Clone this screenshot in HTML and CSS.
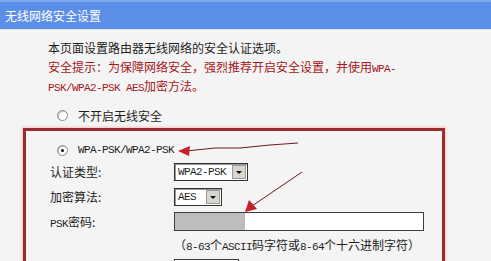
FILE: index.html
```html
<!DOCTYPE html>
<html lang="zh-CN">
<head>
  <meta charset="UTF-8">
  <title>无线网络安全设置</title>
  <link rel="stylesheet" href="styles.css">
</head>
<body>
<div class="title-bar">无线网络安全设置</div>

<div class="page">
  <div class="intro">
    <p>本页面设置路由器无线网络的安全认证选项。</p>
    <p class="warn">安全提示：为保障网络安全，强烈推荐开启安全设置，并使用<span class="en">WPA-</span></p>
    <p class="warn"><span class="en">PSK/WPA2-PSK AES</span>加密方法。</p>
  </div>

  <div class="opt opt-off">
    <i class="radio"></i><span>不开启无线安全</span>
  </div>

  <div class="box">
    <div class="opt">
      <i class="radio on"></i><span class="en">WPA-PSK/WPA2-PSK</span>
    </div>

    <div class="row">
      <label>认证类型:</label>
      <div class="sel wide"><span class="en">WPA2-PSK</span><b class="drop"></b></div>
    </div>
    <div class="row">
      <label>加密算法:</label>
      <div class="sel"><span class="en">AES</span><b class="drop"></b></div>
    </div>
    <div class="row">
      <label><span class="en">PSK</span>密码:</label>
      <div class="txt"><i class="mask"></i></div>
    </div>
    <div class="hint">（<span class="en">8-63</span>个<span class="en">ASCII</span>码字符或<span class="en">8-64</span>个十六进制字符）</div>
    <div class="row">
      <label>组密钥更新周期:</label>
      <div class="txt short"><span class="en">86400</span></div>
    </div>
  </div>
</div>

<!-- the two hand-drawn arrows on top of the form -->
<svg class="marks" width="491" height="261" viewBox="0 0 491 261">
  <polyline points="186,151 215,148 240,148 270,145 298,143" fill="none" stroke="#6b1a1c" stroke-width="1"/>
  <polygon points="178,151 190,146 189,156" fill="#c8202a"/>
  <line x1="302" y1="172" x2="252" y2="206" stroke="#6b1a1c" stroke-width="1"/>
  <polygon points="245,212 249,200 257,209" fill="#c8202a"/>
</svg>
</body>
</html>
```

FILE: styles.css
```css
body {
  margin:0;
  padding:0;
  background:#f4f4f4;
  font-family:"Noto Sans CJK SC", "Noto Sans", sans-serif;
  font-size:12px;
  color:#1e1e1e;
  width:491px;
  height:261px;
  overflow:hidden;
  position:relative;
}

.en {
  font-family:"Liberation Mono", monospace;
  font-size:11px;
  letter-spacing:-0.6px;
}

.title-bar {
  height:27px;
  line-height:27px;
  padding-left:5px;
  color:#fff;
  font-size:12px;
  background:#5b8ee6;
  border-top:2px solid #7ea8ee;
  border-bottom:1px solid #dfe6f2;
}

.page {
  padding-top:8px;
}

.intro {
  padding-left:48px;
}
.intro p {
  margin:0;
  height:19px;
  line-height:19px;
}
.intro .warn {
  color:#a4161a;
}

.opt {
  display:flex;
  align-items:center;
  height:20px;
  padding-left:56px;
}
.opt-off {
  margin-top:10px;
  padding-left:57px;
}

.radio {
  width:9px;
  height:9px;
  margin-right:10px;
  border-radius:50%;
  background:#fff;
  border:1px solid #8a8a8a;
  box-shadow:inset 1px 1px 0 #c8c8c8;
  position:relative;
}
.radio.on:after {
  content:'';
  position:absolute;
  left:3px;
  top:3px;
  width:3px;
  height:3px;
  border-radius:50%;
  background:#111;
}

.box {
  margin-top:3px;
  margin-left:23px;
  width:416px;
  height:140px;
  border:3px solid #9a2c2f;
  border-bottom:0;
  box-shadow:0 0 2px 1px #f3c4c4;
  padding-top:9px;
}
.box .opt {
  padding-left:31px;
}

.row {
  display:flex;
  align-items:center;
  height:25px;
  padding-left:24px;
}
.box .opt + .row {
  margin-top:-1px;
}
.row label {
  width:124px;
}

.sel {
  display:flex;
  align-items:center;
  justify-content:space-between;
  height:16px;
  width:69px;
  padding-left:3px;
  background:#fff;
  border:1px solid #333;
  box-shadow:inset 1px 1px 0 #999;
}
.sel.wide {
  width:69px;
}
.sel:not(.wide) {
  width:43px;
}
.drop {
  width:14px;
  height:14px;
  margin-right:1px;
  background:#d8d6d0;
  border:1px solid #9c9a94;
  box-sizing:border-box;
  position:relative;
}
.drop:after {
  content:'';
  position:absolute;
  left:3px;
  top:5px;
  border-left:3px solid transparent;
  border-right:3px solid transparent;
  border-top:3px solid #111;
}

.txt {
  height:17px;
  width:248px;
  background:#fff;
  border:1px solid #3a3f46;
  display:flex;
  align-items:center;
}
.mask {
  width:70px;
  height:17px;
  background:#bdbdbd;
}
.txt.short {
  width:60px;
  padding-left:3px;
}

.hint {
  height:22px;
  line-height:22px;
  padding-left:148px;
}

.marks {
  position:absolute;
  left:0;
  top:0;
  pointer-events:none;
}
```
